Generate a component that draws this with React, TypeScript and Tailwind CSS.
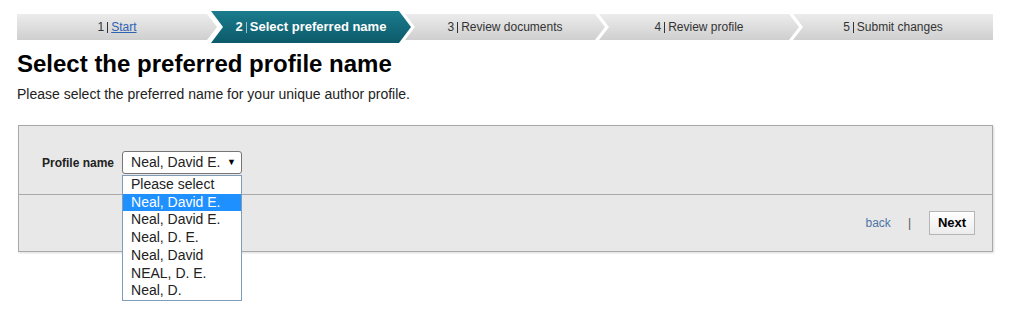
export default function App() {
  const steps = [
    { n: '1', label: 'Start', link: true },
    { n: '2', label: 'Select preferred name', active: true },
    { n: '3', label: 'Review documents' },
    { n: '4', label: 'Review profile' },
    { n: '5', label: 'Submit changes' },
  ]

  const options = ['Please select', 'Neal, David E.', 'Neal, David E.', 'Neal, D. E.', 'Neal, David', 'NEAL, D. E.', 'Neal, D.']

  return (
    <div className="min-h-[319px] w-[1012px] bg-white font-['Liberation_Sans',Arial,sans-serif] text-[#222]">
      <div className="box-content flex h-[32px] items-center pl-[17px] pr-[19px] pt-[11px]">
        {steps.map((s, i) => {
          const first = i === 0
          const last = i === steps.length - 1
          let clip = '[clip-path:polygon(0_0,calc(100%-10px)_0,100%_50%,calc(100%-10px)_100%,0_100%,10px_50%)]'
          if (first) clip = '[clip-path:polygon(0_0,calc(100%-10px)_0,100%_50%,calc(100%-10px)_100%,0_100%)]'
          if (last) clip = '[clip-path:polygon(0_0,100%_0,100%_100%,0_100%,10px_50%)]'
          if (s.active) clip = '[clip-path:polygon(0_0,calc(100%-12px)_0,100%_50%,calc(100%-12px)_100%,0_100%,12px_50%)]'
          return (
            <div
              key={i}
              className={
                'flex flex-1 basis-0 items-center justify-center ' +
                (first ? '' : '-ml-[6px] ') +
                clip +
                (s.active
                  ? ' h-[32px] bg-gradient-to-b from-[#1b7c8d] to-[#0c5a6a] text-[13px] font-bold text-white'
                  : ' h-[26px] bg-gradient-to-b from-[#ececec] to-[#cfcfcf] text-[12px] text-[#333]')
              }
            >
              <span>{s.n}</span>
              <span className={'mx-[3px] inline-block h-[11px] w-px ' + (s.active ? 'bg-[#9cc4cc]' : 'bg-[#333]')} />
              {s.link ? <a className="text-[#2d62b3] underline">{s.label}</a> : <span>{s.label}</span>}
            </div>
          )
        })}
      </div>

      <h1 className="mt-[7px] px-[17px] text-[24px] font-bold leading-[28px] text-black">Select the preferred profile name</h1>
      <p className="mt-[7px] px-[17px] text-[14px] leading-[18px] text-[#222]">
        Please select the preferred name for your unique author profile.
      </p>

      <div className="ml-[18px] mt-[22px] w-[975px] border border-[#a9a9a9] bg-[#e8e8e8] shadow-[1px_1px_2px_rgba(0,0,0,0.15)]">
        <div className="flex h-[69px] items-center border-b border-[#a9a9a9] pl-[23px] pt-[5px]">
          <span className="text-[12px] font-bold text-[#222]">Profile name</span>
          <div className="relative ml-[8px]">
            <div className="flex h-[23px] w-[120px] items-center justify-between rounded-[3px] border border-[#767676] bg-white pl-[8px] pr-[5px] text-[14px] text-[#222]">
              <span>Neal, David E.</span>
              <span className="text-[9px] text-black">▼</span>
            </div>
            <div className="absolute left-0 top-[24px] z-10 w-[120px] border border-[#7f9db9] bg-white text-[14px] leading-[17.7px] text-[#222]">
              {options.map((o, i) => (
                <div key={i} className={'pl-[8px] ' + (i === 1 ? 'bg-[#1e90ff] text-white' : '')}>
                  {o}
                </div>
              ))}
            </div>
          </div>
        </div>
        <div className="flex h-[56px] items-center justify-end pr-[17px]">
          <a className="text-[12px] text-[#4f75a7]">back</a>
          <span className="ml-[17px] mr-[18px] text-[12px] text-[#555]">|</span>
          <button className="h-[24px] w-[46px] border border-[#b5b5b5] bg-gradient-to-b from-white to-[#ececec] text-[13px] font-bold text-black">
            Next
          </button>
        </div>
      </div>
    </div>
  )
}
